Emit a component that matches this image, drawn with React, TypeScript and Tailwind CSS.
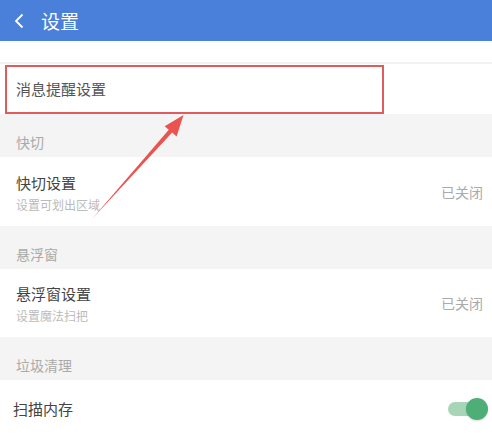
const font = "font-['Noto_Sans_CJK_SC','Noto_Sans',sans-serif]"

function SectionTitle({ title }: { title: string }) {
  return (
    <div className="h-[43px] bg-[#f4f4f4] pt-[18px] pl-[16px] text-[14px] leading-[20px] text-[#aaaaaa]">
      {title}
    </div>
  )
}

function Toggle() {
  return (
    <div className="relative h-[22px] w-[40px]">
      <div className="absolute top-[4px] left-0 h-[14px] w-[30px] rounded-full bg-[#a6d6b7]" />
      <div className="absolute top-0 right-0 size-[22px] rounded-full bg-[#4dae78] shadow-[0_1px_2px_rgba(0,0,0,0.15)]" />
    </div>
  )
}

function DetailRow({ title, sub, height }: { title: string; sub: string; height: string }) {
  return (
    <div className={`flex items-center justify-between bg-white pr-[9px] pl-[16px] ${height}`}>
      <div className="flex flex-col gap-[4px] pt-[2px]">
        <span className="text-[15px] leading-[20px] text-[#444444]">{title}</span>
        <span className="text-[12px] leading-[16px] text-[#bbbbbb]">{sub}</span>
      </div>
      <span className="text-[14px] leading-[20px] text-[#aaaaaa]">已关闭</span>
    </div>
  )
}

export default function App() {
  return (
    <div className={`relative h-[433px] w-[492px] overflow-hidden bg-white ${font}`}>
      <header className="flex h-[41px] items-center gap-[15px] bg-[#4a80d9] pl-[14px]">
        <svg width="12" height="16" viewBox="0 0 12 16" fill="none">
          <path d="M8.5 1.5L2 8L8.5 14.5" stroke="white" strokeWidth="1.8" />
        </svg>
        <span className="text-[19px] leading-[24px] text-white">设置</span>
      </header>

      <div className="h-[21px] bg-white" />
      <div className="h-[2px] bg-[#f1f1f1]" />

      <div className="relative flex h-[50px] items-center bg-white pl-[16px]">
        <span className="text-[15px] leading-[20px] text-[#555555]">消息提醒设置</span>
        <div className="absolute top-[1px] left-[5px] h-[49px] w-[379px] border-[2.5px] border-[#e05c5c]" />
      </div>

      <SectionTitle title="快切" />
      <DetailRow title="快切设置" sub="设置可划出区域" height="h-[69px]" />

      <SectionTitle title="悬浮窗" />
      <DetailRow title="悬浮窗设置" sub="设置魔法扫把" height="h-[68px]" />

      <SectionTitle title="垃圾清理" />
      <div className="flex h-[58px] items-center justify-between bg-white pr-[4px] pl-[13px]">
        <span className="text-[15px] leading-[20px] text-[#444444]">扫描内存</span>
        <Toggle />
      </div>

      <svg className="pointer-events-none absolute top-0 left-0" width="492" height="433" viewBox="0 0 492 433">
        <polygon
          points="92,219 172.2,132.6 176.6,136.4 183.5,115 164.7,126.2 168.8,129.7"
          fill="#ea5350"
        />
      </svg>
    </div>
  )
}
